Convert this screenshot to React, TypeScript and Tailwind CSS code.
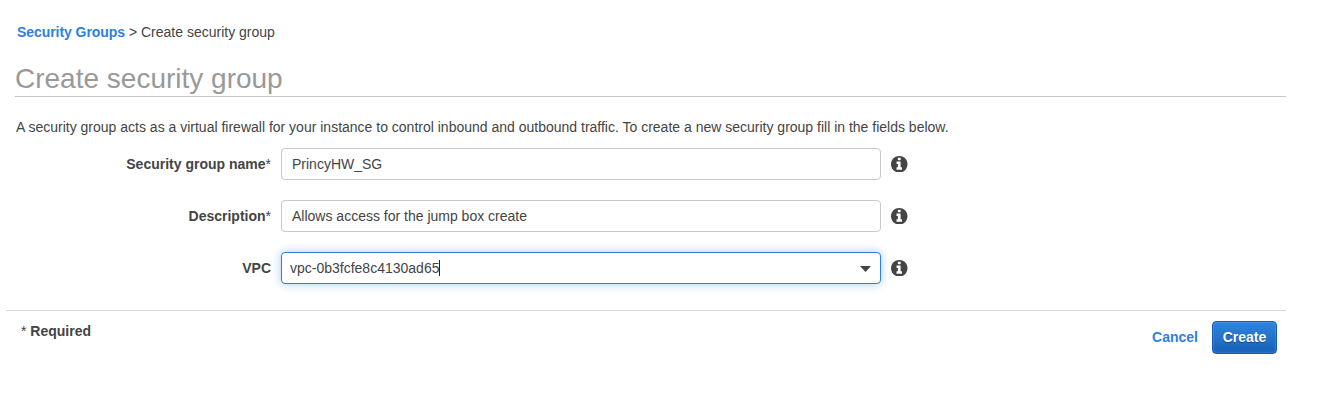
import type { ReactNode } from "react";

function InfoIcon() {
  return (
    <svg className="ml-2.5 size-[16.5px] shrink-0" viewBox="128 128 1536 1536" fill="currentColor">
      <path d="M1152 1376v-160q0-14-9-23t-23-9h-96v-512q0-14-9-23t-23-9h-320q-14 0-23 9t-9 23v160q0 14 9 23t23 9h96v320h-96q-14 0-23 9t-9 23v160q0 14 9 23t23 9h448q14 0 23-9t9-23zm-128-896v-160q0-14-9-23t-23-9h-192q-14 0-23 9t-9 23v160q0 14 9 23t23 9h192q14 0 23-9t9-23zm640 416q0 209-103 385.5t-279.5 279.5-385.5 103-385.5-103-279.5-279.5-103-385.5 103-385.5 279.5-279.5 385.5-103 385.5 103 279.5 279.5 103 385.5z" />
    </svg>
  );
}

function Row({ label, required, children }: { label: string; required?: boolean; children: ReactNode }) {
  return (
    <div className="flex h-8 items-center">
      <div className="w-[271px] text-right font-bold">
        {label}
        {required && <span className="font-normal">*</span>}
      </div>
      <div className="ml-2.5 w-[600px]">{children}</div>
      <InfoIcon />
    </div>
  );
}

function Field({ value }: { value: string }) {
  return (
    <div className="flex h-8 items-center rounded-[4px] border border-[#c8c8c8] bg-white pl-2.5">{value}</div>
  );
}

export default function App() {
  return (
    <div className="h-[400px] w-[1328px] overflow-hidden bg-white font-['Liberation_Sans',Arial,sans-serif] text-[14px] leading-5 text-[#444]">
      <nav className="pl-[17px] pt-[22px]">
        <a className="font-bold tracking-[-0.06px] text-[#2f80dd]">Security Groups</a> &gt; Create security group
      </nav>
      <h1 className="ml-[15px] mt-5 h-[35px] w-[1271px] border-b border-[#c8c8c8] text-[28px] leading-[34px] text-[#999]">
        Create security group
      </h1>
      <p className="ml-4 mt-5">
        A security group acts as a virtual firewall for your instance to control inbound and outbound traffic. To create a new security group fill in the fields below.
      </p>
      <div className="mt-[11px] flex flex-col gap-5">
        <Row label="Security group name" required>
          <Field value="PrincyHW_SG" />
        </Row>
        <Row label="Description" required>
          <Field value="Allows access for the jump box create" />
        </Row>
        <Row label="VPC">
          <div className="flex h-8 items-center rounded-[4px] border border-[#2f80dd] bg-white pl-2 pr-[9px] shadow-[0_0_10px_rgba(47,128,221,0.42)]">
            <span>vpc-0b3fcfe8c4130ad65</span>
            <span className="h-4 w-px bg-[#222]" />
            <svg className="ml-auto mt-0.5 h-1.5 w-[11px]" viewBox="0 0 11 6" fill="currentColor">
              <path d="M0 0h11L5.5 6z" />
            </svg>
          </div>
        </Row>
      </div>
      <footer className="ml-1.5 mt-[26px] flex w-[1280px] items-start justify-between border-t border-[#dadada] pl-[15px] pr-[9px] pt-2.5">
        <div>
          * <span className="font-bold">Required</span>
        </div>
        <div className="flex items-center gap-3.5 font-bold">
          <button className="pb-0.5 text-[#2f80dd]">Cancel</button>
          <button className="h-[33px] w-[65px] rounded-[4px] border border-[#135db0] bg-linear-to-b from-[#2f84dc] to-[#1663b8] pb-0.5 text-white shadow-[inset_0_0_1px_1px_rgba(255,255,255,0.12)] [text-shadow:0_1px_1px_rgba(0,0,0,0.35)]">
            Create
          </button>
        </div>
      </footer>
    </div>
  );
}
